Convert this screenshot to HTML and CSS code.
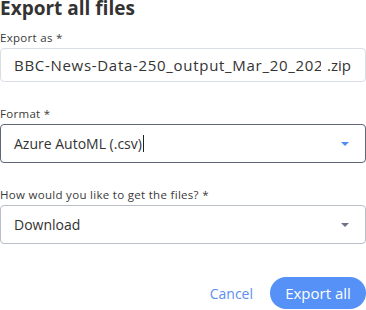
FILE: index.html
```html
<!DOCTYPE html>
<html lang="en">
<head>
    <meta charset="UTF-8">
    <meta name="viewport" content="width=device-width, initial-scale=1.0">
    <title>Export all files</title>
    <link rel="stylesheet" href="styles.css">
</head>
<body>
    <div class="dialog">
        <h2 class="title">Export all files</h2>

        <div class="form-group name-group">
            <label class="field-label">Export as *</label>
            <div class="text-box">
                <span class="text-value">BBC-News-Data-250_output_Mar_20_2021</span>
                <span class="text-suffix">.zip</span>
            </div>
        </div>

        <div class="form-group">
            <label class="field-label">Format *</label>
            <div class="select-box focused">
                <span class="select-value">Azure AutoML (.csv)<span class="caret"></span></span>
                <svg class="arrow" width="8" height="4" viewBox="0 0 8 4"><path d="M0 0h8L4 4z" fill="#4f8ef7"/></svg>
            </div>
        </div>

        <div class="form-group">
            <label class="field-label">How would you like to get the files? *</label>
            <div class="select-box">
                <span class="select-value">Download</span>
                <svg class="arrow" width="8" height="4" viewBox="0 0 8 4"><path d="M0 0h8L4 4z" fill="#6b7385"/></svg>
            </div>
        </div>

        <div class="actions">
            <button class="btn-cancel">Cancel</button>
            <button class="btn-primary">Export all</button>
        </div>
    </div>
</body>
</html>
```

FILE: styles.css
```css
body {
    margin: 0;
    padding: 0;
    font-family: "Open Sans", Arial, sans-serif;
    color: #333;
    background: #fff;
    overflow: hidden;
}
.dialog {
    width: 366px;
}
.title {
    margin: -1px 0 0 0;
    font-size: 19px;
    line-height: 19px;
    font-weight: 700;
    color: #333;
}
.form-group {
    margin-top: 25px;
}
.name-group {
    margin-top: 13px;
}
.field-label {
    display: block;
    font-size: 11.5px;
    line-height: 14px;
    color: #3a3a3a;
    letter-spacing: 0.3px;
    margin-bottom: 3px;
}
.text-box {
    display: flex;
    align-items: center;
    height: 32px;
    padding: 0 14px 0 13px;
    border: 1px solid #d9dde5;
    border-radius: 4px;
    width: 337px;
    font-size: 15px;
}
.text-value {
    flex: 1;
    overflow: hidden;
    white-space: nowrap;
    letter-spacing: 0.7px;
}
.text-suffix {
    margin-left: 6px;
}
.select-box {
    display: flex;
    align-items: center;
    justify-content: space-between;
    height: 37px;
    padding: 0 16px 0 13px;
    border: 1px solid #b9bec9;
    border-radius: 4px;
    width: 335px;
    font-size: 14px;
}
.select-box.focused {
    border-color: #5e6678;
}
.select-value {
    display: flex;
    align-items: center;
}
.caret {
    display: inline-block;
    width: 1px;
    height: 17px;
    margin-left: 1px;
    background: #222;
}
.actions {
    display: flex;
    justify-content: flex-end;
    align-items: center;
    margin-top: 33px;
}
.actions button {
    font-family: inherit;
    font-size: 15px;
    border: none;
    cursor: pointer;
}
.btn-cancel {
    background: none;
    color: #5b8ff0;
    padding: 0;
    margin-right: 17px;
    font-size: 14px !important;
}
.btn-primary {
    background: #5591f6;
    color: #fff;
    height: 32px;
    width: 96px;
    border-radius: 16px;
}
```
